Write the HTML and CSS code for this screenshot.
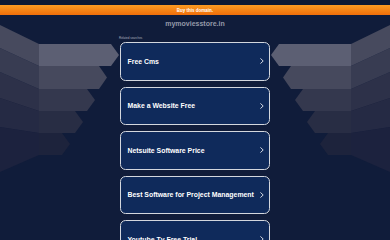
FILE: index.html
```html
<!DOCTYPE html>
<html lang="en">
<head>
<meta charset="utf-8">
<title>mymoviesstore.in</title>
<link rel="stylesheet" href="styles.css">
</head>
<body>
<div class="topstrip"></div>
<div class="buybar"><a class="buylink" href="#">Buy this domain.</a></div>
<div class="stage">
  <svg class="deco" viewBox="0 15 120 225" width="120" height="225" aria-hidden="true">
    <polygon fill="#1c223e" points="0,127 39,133 39,155 0,172"/>
    <polygon fill="#252a44" points="0,98 39,111 39,133 0,127"/>
    <polygon fill="#2d3149" points="0,72 39,89 39,111 0,98"/>
    <polygon fill="#383c52" points="0,48 39,66 39,89 0,72"/>
    <polygon fill="#474a5e" points="0,25 39,44 39,66 0,48"/>
    <polygon fill="#1d233c" points="39,133 62,133 70,144 62,155 39,155"/>
    <polygon fill="#282d44" points="39,111 75,111 83,122 75,133 39,133"/>
    <polygon fill="#34384e" points="39,89 87,89 95,100 87,111 39,111"/>
    <polygon fill="#46495d" points="39,66 99,66 107,77.5 99,89 39,89"/>
    <polygon fill="#5c5f73" points="39,44 111,44 119,55 111,66 39,66"/>
  </svg>
  <main class="center">
    <h1 class="domain">mymoviesstore.in</h1>
    <p class="related">Related searches</p>
    <ul class="links">
      <li><a class="card" href="#"><span>Free Cms</span><svg class="chev" viewBox="0 0 4 6" width="4" height="6"><polyline points="0.7,0.7 3.2,3 0.7,5.3"/></svg></a></li>
      <li><a class="card" href="#"><span>Make a Website Free</span><svg class="chev" viewBox="0 0 4 6" width="4" height="6"><polyline points="0.7,0.7 3.2,3 0.7,5.3"/></svg></a></li>
      <li><a class="card" href="#"><span>Netsuite Software Price</span><svg class="chev" viewBox="0 0 4 6" width="4" height="6"><polyline points="0.7,0.7 3.2,3 0.7,5.3"/></svg></a></li>
      <li><a class="card" href="#"><span>Best Software for Project Management</span><svg class="chev" viewBox="0 0 4 6" width="4" height="6"><polyline points="0.7,0.7 3.2,3 0.7,5.3"/></svg></a></li>
      <li><a class="card" href="#"><span>Youtube Tv Free Trial</span><svg class="chev" viewBox="0 0 4 6" width="4" height="6"><polyline points="0.7,0.7 3.2,3 0.7,5.3"/></svg></a></li>
    </ul>
  </main>
  <svg class="deco deco-right" viewBox="0 15 120 225" width="120" height="225" aria-hidden="true">
    <polygon fill="#1c223e" points="0,127 39,133 39,155 0,172"/>
    <polygon fill="#252a44" points="0,98 39,111 39,133 0,127"/>
    <polygon fill="#2d3149" points="0,72 39,89 39,111 0,98"/>
    <polygon fill="#383c52" points="0,48 39,66 39,89 0,72"/>
    <polygon fill="#474a5e" points="0,25 39,44 39,66 0,48"/>
    <polygon fill="#1d233c" points="39,133 62,133 70,144 62,155 39,155"/>
    <polygon fill="#282d44" points="39,111 75,111 83,122 75,133 39,133"/>
    <polygon fill="#34384e" points="39,89 87,89 95,100 87,111 39,111"/>
    <polygon fill="#46495d" points="39,66 99,66 107,77.5 99,89 39,89"/>
    <polygon fill="#5c5f73" points="39,44 111,44 119,55 111,66 39,66"/>
  </svg>
</div>
</body>
</html>
```

FILE: styles.css
```css
html, body {
  margin: 0;
  padding: 0;
}
body {
  width: 390px;
  height: 240px;
  overflow: hidden;
  background: #101c3a;
  font-family: "Liberation Sans", Arial, sans-serif;
}
.topstrip {
  height: 5px;
  background: #0e1933;
}
.buybar {
  height: 10px;
  background: linear-gradient(#fb9b22, #f06e0a);
  display: flex;
  align-items: center;
  justify-content: center;
}
.buylink {
  color: #ffffff;
  font-weight: bold;
  font-size: 4.5px;
  line-height: 5px;
  text-decoration: none;
}
.stage {
  display: grid;
  grid-template-columns: 120px 150px 120px;
  align-items: start;
}
.deco {
  display: block;
}
.deco-right {
  transform: scaleX(-1);
}
.center {
  display: flex;
  flex-direction: column;
}
.domain {
  margin: 4px 0 0;
  height: 10px;
  line-height: 10px;
  font-size: 7px;
  font-weight: bold;
  color: #9499a8;
  text-align: center;
}
.related {
  margin: 7px 0 1px -1px;
  height: 5px;
  line-height: 5px;
  font-size: 3px;
  color: #aab0be;
}
.links {
  list-style: none;
  margin: 0;
  padding: 0;
  display: flex;
  flex-direction: column;
  gap: 6px;
}
.card {
  box-sizing: border-box;
  height: 38.5px;
  display: flex;
  align-items: center;
  justify-content: space-between;
  padding: 0 5.5px 0 6.5px;
  border: 1.3px solid #d3d7de;
  border-radius: 5.5px;
  background: #0f2a5b;
  color: #ffffff;
  font-size: 6.9px;
  font-weight: bold;
  text-decoration: none;
  white-space: nowrap;
}
.chev {
  display: block;
  flex: none;
}
.chev polyline {
  fill: none;
  stroke: #e6e9ee;
  stroke-width: 0.9;
  stroke-linecap: round;
  stroke-linejoin: round;
}
```
